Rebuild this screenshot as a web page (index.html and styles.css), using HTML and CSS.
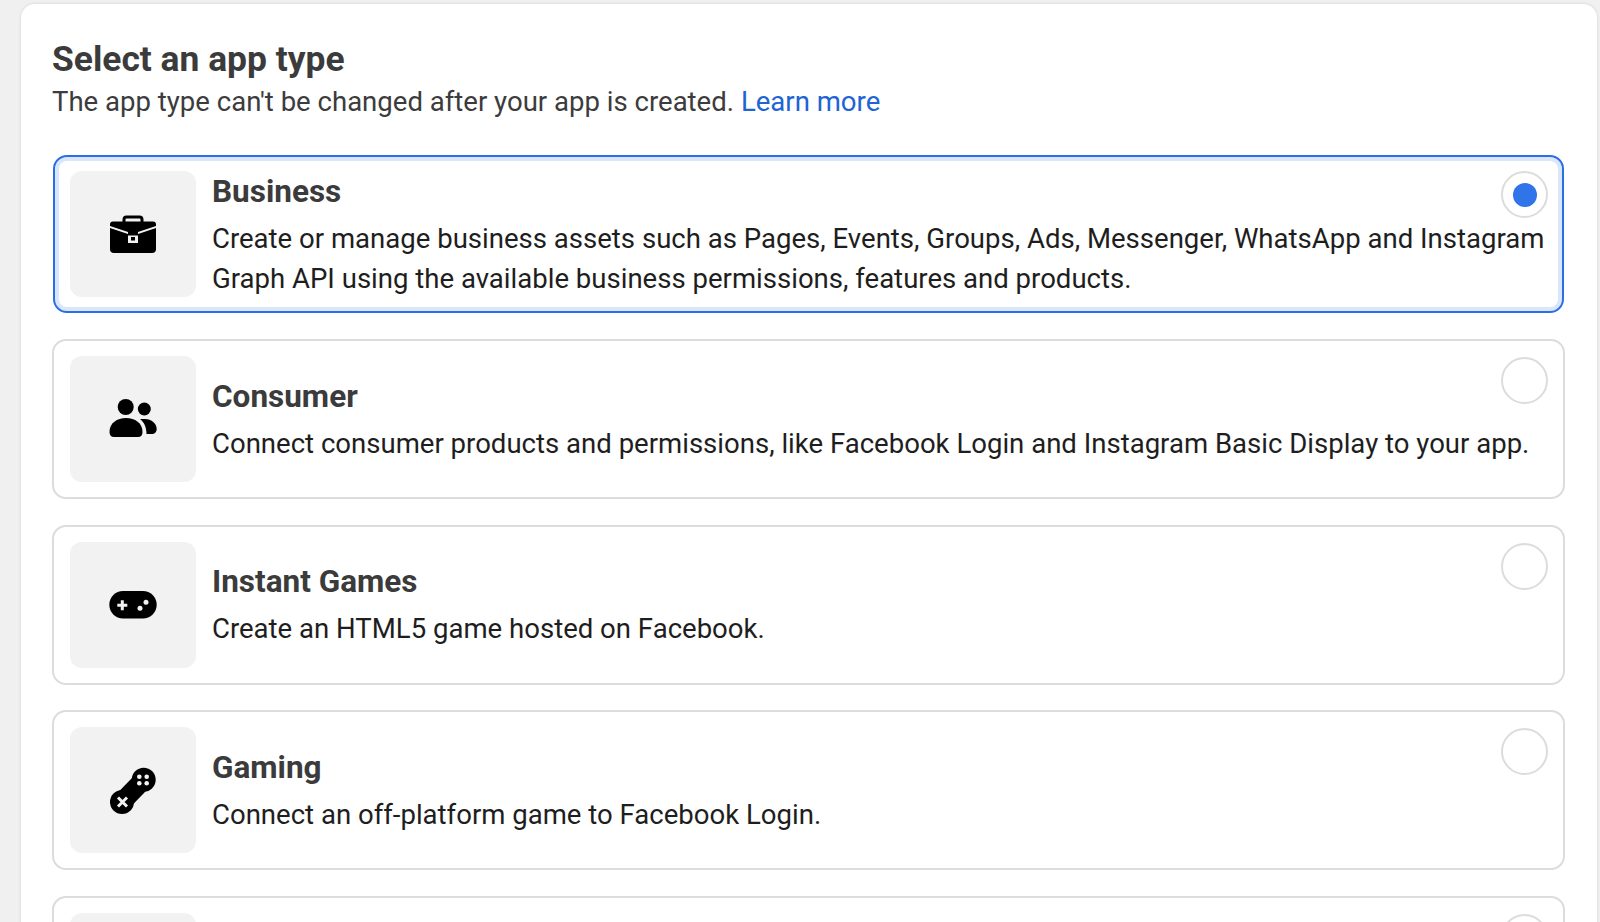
FILE: index.html
```html
<!DOCTYPE html>
<html lang="en">
<head>
<meta charset="utf-8">
<title>Select an app type</title>
<link rel="stylesheet" href="styles.css">
</head>
<body>
<main class="panel">
  <h1 class="title">Select an app type</h1>
  <p class="sub">The app type can't be changed after your app is created. <a class="link" href="#">Learn more</a></p>
  <div class="list">
    <div class="card selected">
      <div class="tile">
        <svg class="icon" viewBox="0 0 48 48"><g transform="translate(1 5.500)"><path d="M14 7V4A2.500 2.500 0 0 1 16.500 1.500H29.500A2.500 2.500 0 0 1 32 4V7" fill="none" stroke="#000" stroke-width="3"/><path d="M3 6H43A3 3 0 0 1 46 9V10.500L28 16.500V20H18V16.500L0 10.500V9A3 3 0 0 1 3 6Z"/><path d="M0 12.500L18 18.500V27.500H28V18.500L46 12.500V33.500A4 4 0 0 1 42 37.500H4A4 4 0 0 1 0 33.500Z"/><rect x="21" y="21.500" width="4" height="3.500"/></g></svg>
      </div>
      <div class="body">
        <h2 class="name">Business</h2>
        <p class="desc">Create or manage business assets such as Pages, Events, Groups, Ads, Messenger, WhatsApp and Instagram Graph API using the available business permissions, features and products.</p>
      </div>
      <span class="radio on"></span>
    </div>
    <div class="card">
      <div class="tile">
        <svg class="icon" viewBox="0 0 48 48"><circle cx="16.700" cy="12" r="8"/><path d="M0.500 37C0.500 28 8 23 17 23S33.500 28 33.500 37C33.500 40 32 42 29 42H5C2 42 0.500 40 0.500 37Z"/><circle cx="35.300" cy="14" r="6.500"/><path d="M31 24H36C42.500 24 47.700 28.500 47.700 34C47.700 37 45.500 39 43 39H37.500C37.500 32 35 27 31 24Z"/></svg>
      </div>
      <div class="body">
        <h2 class="name">Consumer</h2>
        <p class="desc">Connect consumer products and permissions, like Facebook Login and Instagram Basic Display to your app.</p>
      </div>
      <span class="radio"></span>
    </div>
    <div class="card">
      <div class="tile">
        <svg class="icon" viewBox="0 0 48 48"><rect x="0.300" y="10" width="47.400" height="27.500" rx="13.750"/><path d="M13.300 19.300V29.300M8.300 24.300H18.300" stroke="#f2f2f2" stroke-width="3"/><circle cx="31" cy="27.300" r="2.500" fill="#f2f2f2"/><circle cx="37" cy="21.300" r="2.500" fill="#f2f2f2"/></svg>
      </div>
      <div class="body">
        <h2 class="name">Instant Games</h2>
        <p class="desc">Create an HTML5 game hosted on Facebook.</p>
      </div>
      <span class="radio"></span>
    </div>
    <div class="card">
      <div class="tile">
        <svg class="icon" viewBox="0 0 48 48"><circle cx="13" cy="36" r="12"/><circle cx="34.700" cy="13.700" r="12"/><path d="M13 36L34.700 13.700" stroke="#000" stroke-width="19"/><path d="M9 31.500L18 40.500M18 31.500L9 40.500" stroke="#f2f2f2" stroke-width="3"/><g fill="#f2f2f2"><circle cx="30.300" cy="10.700" r="2.300"/><circle cx="37.700" cy="10.700" r="2.300"/><circle cx="30.300" cy="17.300" r="2.300"/><circle cx="37.700" cy="17.300" r="2.300"/></g></svg>
      </div>
      <div class="body">
        <h2 class="name">Gaming</h2>
        <p class="desc">Connect an off-platform game to Facebook Login.</p>
      </div>
      <span class="radio"></span>
    </div>
    <div class="card">
      <div class="tile"></div>
      <span class="radio"></span>
    </div>
  </div>
</main>
</body>
</html>
```

FILE: styles.css
```css
html, body {
  margin: 0;
  height: 100%;
  overflow: hidden;
}
body {
  background: #f0f0f0;
  font-family: Roboto, "Liberation Sans", sans-serif;
  padding: 4px 3px 0 21px;
  box-sizing: border-box;
}
.panel {
  background: #fff;
  border-radius: 14px 14px 0 0;
  box-shadow: 0 0 3px rgba(0, 0, 0, 0.14);
  padding: 35px 32px 0 31px;
  height: 100%;
}
.title {
  margin: 0;
  font-size: 35.4px;
  line-height: 40px;
  font-weight: 700;
  color: #3b3b3b;
}
.sub {
  margin: 3px 0 0;
  font-size: 27.55px;
  line-height: 40px;
  color: #3c3c3c;
}
.link {
  color: #2064d4;
  text-decoration: none;
}
.list {
  display: flex;
  flex-direction: column;
  gap: 25.4px;
  margin-top: 33px;
}
.card {
  position: relative;
  display: flex;
  align-items: center;
  gap: 16px;
  padding: 15px 16px;
  border: 2px solid #dcdcdc;
  border-radius: 14px;
  background: #fff;
}
.card.selected {
  border-color: #2a6fe4;
  padding: 12.5px 15px;
  box-shadow: inset 0 0 0 4px #d9e6fb;
  margin: 0 1px 1px 1px;
}
.tile {
  flex: none;
  display: flex;
  align-items: center;
  justify-content: center;
  width: 126px;
  height: 126px;
  border-radius: 12px;
  background: #f2f2f2;
}
.icon {
  width: 48px;
  height: 48px;
}
.body {
  padding-top: 2px;
}
.name {
  margin: 0 0 7px;
  font-size: 31.5px;
  line-height: 40px;
  font-weight: 700;
  color: #3b3b3b;
}
.desc {
  margin: 0;
  font-size: 27.55px;
  line-height: 40px;
  color: #1e1e1e;
}
.radio {
  position: absolute;
  top: 16px;
  right: 15px;
  width: 43px;
  height: 43px;
  border: 2px solid #dcdcdc;
  border-radius: 50%;
  background: #fff;
  display: flex;
  align-items: center;
  justify-content: center;
}
.selected .radio {
  top: 14px;
  right: 14px;
}
.radio.on::after {
  content: "";
  width: 24px;
  height: 24px;
  border-radius: 50%;
  background: #2f74e8;
}
```
